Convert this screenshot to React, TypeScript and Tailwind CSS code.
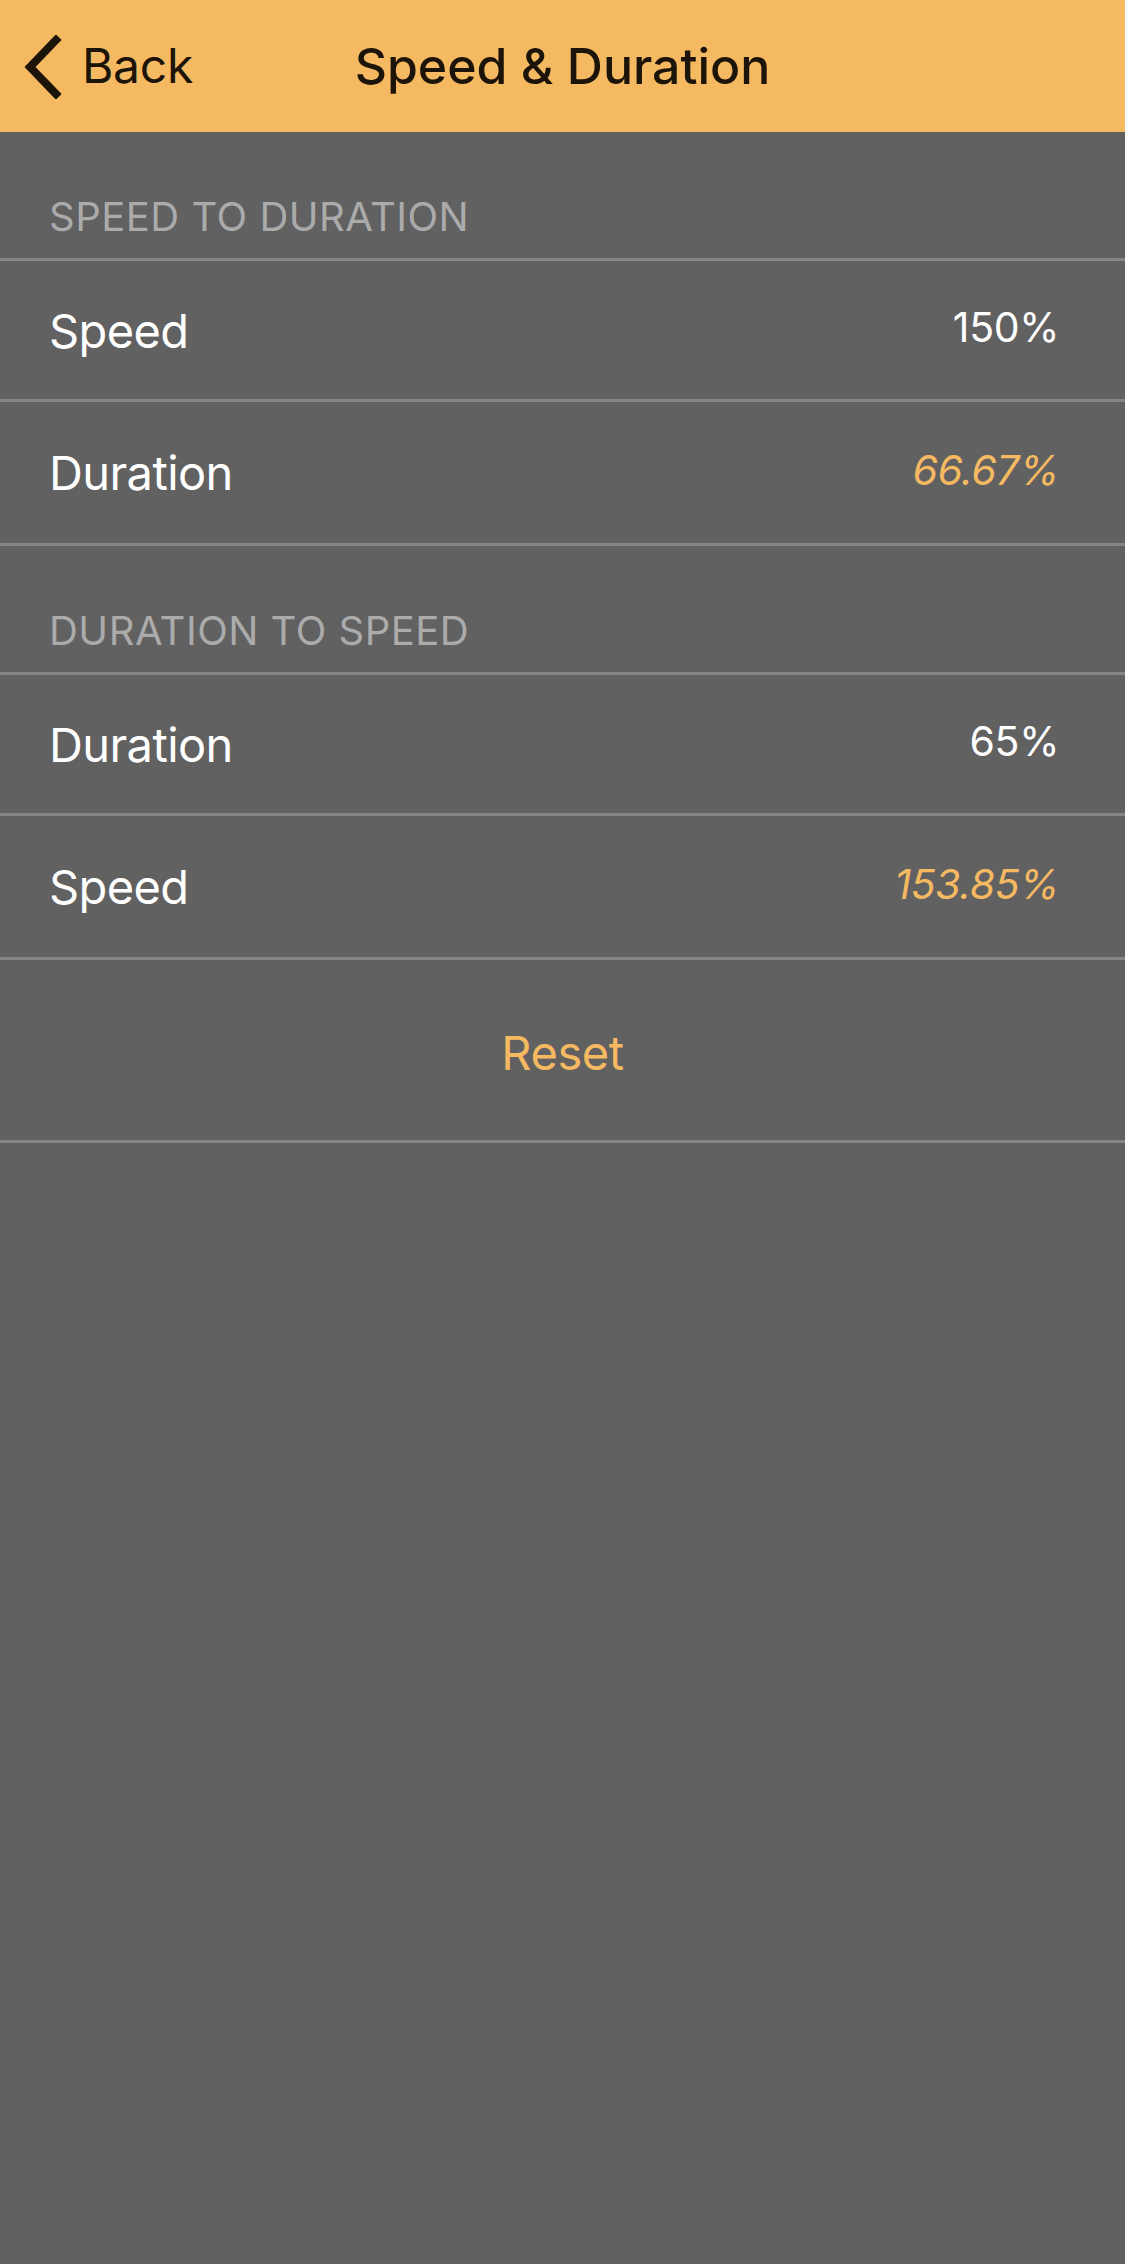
import React from 'react';

interface Row {
  id: string;
  label: string;
  value: string;
  computed?: boolean;
  height: string;
}

interface Section {
  id: string;
  title: string;
  rows: Row[];
}

const sections: Section[] = [
  {
    id: 'speed-to-duration',
    title: 'SPEED TO DURATION',
    rows: [
      { id: 's1', label: 'Speed', value: '150%', height: 'h-[141px]' },
      { id: 'd1', label: 'Duration', value: '66.67%', computed: true, height: 'h-[144px]' },
    ],
  },
  {
    id: 'duration-to-speed',
    title: 'DURATION TO SPEED',
    rows: [
      { id: 'd2', label: 'Duration', value: '65%', height: 'h-[141px]' },
      { id: 's2', label: 'Speed', value: '153.85%', computed: true, height: 'h-[144px]' },
    ],
  },
];

function BackChevron() {
  return (
    <svg width="40" height="64" viewBox="0 0 40 64" className="shrink-0">
      <polyline
        points="34,5 8,32 34,59"
        fill="none"
        stroke="#1c1409"
        strokeWidth="8"
        strokeLinecap="square"
        strokeLinejoin="miter"
      />
    </svg>
  );
}

export default function App() {
  return (
    <div className="min-h-[2264px] w-full bg-[#616161] font-['Inter',_'Liberation_Sans',_sans-serif]">
      {/* Nav bar */}
      <header className="relative flex h-[132px] items-center bg-[#f5b962]">
        <button className="flex items-center gap-[20px] pl-[22px] pt-[1px] text-[48px] leading-none tracking-[-0.3px] text-[#1c1409]">
          <BackChevron />
          <span className="-mt-[2px]">Back</span>
        </button>
        <h1 className="absolute left-1/2 top-[66px] -translate-x-1/2 -translate-y-1/2 whitespace-nowrap text-[50px] font-medium leading-none text-[#1c1409]">
          Speed &amp; Duration
        </h1>
      </header>

      {sections.map((section) => (
        <section key={section.id}>
          <div className="flex h-[126px] items-end pb-[21px] pl-[49px] text-[40px] leading-none tracking-[0.5px] text-[#ababab]">
            {section.title}
          </div>
          <div className="border-t-[3px] border-[#858585]">
            {section.rows.map((row) => (
              <div
                key={row.id}
                className={`flex ${row.height} items-center justify-between border-b-[3px] border-[#858585] pl-[49px] pr-[66px]`}
              >
                <span className="text-[47px] leading-none tracking-[-0.6px] text-white">{row.label}</span>
                <span
                  className={`-mt-[5px] text-[41px] leading-none tracking-[-0.4px] ${
                    row.computed ? 'italic text-[#f5b962]' : 'text-white'
                  }`}
                >
                  {row.value}
                </span>
              </div>
            ))}
          </div>
        </section>
      ))}

      <button className="flex h-[183px] w-full items-center justify-center border-b-[3px] border-[#858585] pt-[4px] text-[47px] leading-none tracking-[-0.4px] text-[#f5b962]">
        Reset
      </button>
    </div>
  );
}
